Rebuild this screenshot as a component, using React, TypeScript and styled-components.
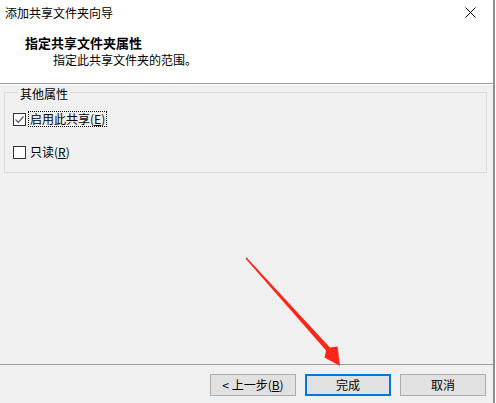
import styled, { createGlobalStyle } from "styled-components";

const GlobalStyle = createGlobalStyle`
  html, body {
    margin: 0;
    padding: 0;
    background: #ffffff;
  }
  body {
    font-family: "Noto Sans CJK SC", "Microsoft YaHei", sans-serif;
    font-size: 12px;
    color: #000;
  }
`;

const Window = styled.div`
  position: relative;
  width: 493px;
  height: 403px;
  border-right: 2px solid #8e8e8e;
  display: flex;
  flex-direction: column;
  background: #f0f0f0;
  overflow: hidden;
`;

const TitleBar = styled.div`
  height: 26px;
  display: flex;
  align-items: center;
  justify-content: space-between;
  padding-left: 5px;
  background: #fff;
  line-height: 12px;
`;

const CloseButton = styled.div`
  width: 46px;
  height: 26px;
  display: flex;
  align-items: center;
  justify-content: center;
  margin-top: -2px;
`;

const Header = styled.div`
  height: 58px;
  background: #fff;
  padding-top: 10px;
  box-sizing: border-box;
  border-bottom: 1px solid #a0a0a0;
`;

const HeaderTitle = styled.div`
  font-weight: bold;
  font-size: 13px;
  line-height: 14px;
  padding-left: 25px;
`;

const HeaderSub = styled.div`
  line-height: 14px;
  margin-top: 3px;
  padding-left: 53px;
`;

const Body = styled.div`
  flex: 1;
  display: flex;
  flex-direction: column;
  border-top: 1px solid #fff;
  padding: 0 6px 0 4px;
`;

const GroupBox = styled.fieldset`
  margin: 0;
  padding: 0 0 12px 8px;
  border: 1px solid #dcdcdc;
  min-width: 0;
`;

const Legend = styled.legend`
  margin-left: 5px;
  padding: 3px 2px 0;
  line-height: 12px;
`;

const CheckRow = styled.label<{ $gap: number }>`
  display: flex;
  align-items: center;
  height: 16px;
  margin-top: ${(p) => p.$gap}px;
`;

const Box = styled.span`
  width: 11px;
  height: 11px;
  border: 1px solid #333;
  background: #fff;
  display: flex;
  align-items: center;
  justify-content: center;
`;

const Caption = styled.span<{ $focused?: boolean }>`
  margin-left: 2px;
  padding: 0 1px;
  line-height: 14px;
  border: 1px dotted ${(p) => (p.$focused ? "#000" : "transparent")};
`;

const Key = styled.span`
  text-decoration: underline;
`;

const Footer = styled.div`
  margin-top: auto;
  margin-left: -4px;
  margin-right: -6px;
  border-top: 1px solid #a0a0a0;
  padding: 9px 7px 7px 0;
  display: flex;
  justify-content: flex-end;
  gap: 9px;
`;

const Button = styled.button<{ $primary?: boolean }>`
  width: 86px;
  height: 22px;
  box-sizing: border-box;
  margin: 0;
  padding: 0;
  font: inherit;
  line-height: 14px;
  color: #000;
  background: #e1e1e1;
  border: ${(p) => (p.$primary ? "2px solid #0078d7" : "1px solid #adadad")};
`;

const Overlay = styled.svg`
  position: absolute;
  left: 0;
  top: 0;
  pointer-events: none;
`;

const Check = () => (
  <svg width="11" height="11" viewBox="0 0 11 11">
    <path d="M1.5 5.5 L4.3 8.3 L9.5 2.5" fill="none" stroke="#555" strokeWidth="1.2" />
  </svg>
);

export default function App() {
  return (
    <>
      <GlobalStyle />
      <Window>
        <TitleBar>
          <span>添加共享文件夹向导</span>
          <CloseButton>
            <svg width="11" height="11" viewBox="0 0 11 11">
              <path d="M0.5 0.5 L10.5 10.5 M10.5 0.5 L0.5 10.5" stroke="#000" strokeWidth="1" />
            </svg>
          </CloseButton>
        </TitleBar>
        <Header>
          <HeaderTitle>指定共享文件夹属性</HeaderTitle>
          <HeaderSub>指定此共享文件夹的范围。</HeaderSub>
        </Header>
        <Body>
          <GroupBox>
            <Legend>其他属性</Legend>
            <CheckRow $gap={11}>
              <Box>
                <Check />
              </Box>
              <Caption $focused>
                启用此共享(<Key>E</Key>)
              </Caption>
            </CheckRow>
            <CheckRow $gap={17}>
              <Box />
              <Caption>
                只读(<Key>R</Key>)
              </Caption>
            </CheckRow>
          </GroupBox>
          <Footer>
            <Button>
              &lt; 上一步(<Key>B</Key>)
            </Button>
            <Button $primary>完成</Button>
            <Button>取消</Button>
          </Footer>
        </Body>
        {/* red annotation arrow pointing at 完成 */}
        <Overlay width="495" height="403" viewBox="0 0 495 403">
          <polygon
            points="246.6,257.5 329.9,347.4 337.5,346.5 340,366 324.5,357.5 326.1,350.6 245.4,258.5"
            fill="#ff2517"
          />
        </Overlay>
      </Window>
    </>
  );
}
